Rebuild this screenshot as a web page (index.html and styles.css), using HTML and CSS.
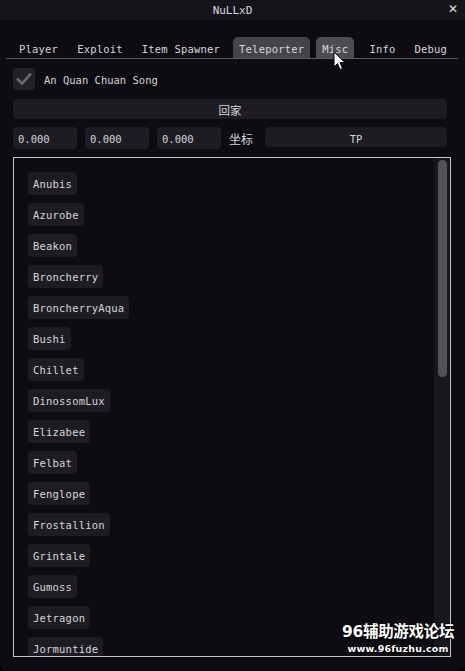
FILE: index.html
```html
<!DOCTYPE html>
<html lang="en">
<head>
    <meta charset="UTF-8">
    <title>NuLLxD</title>
    <link rel="stylesheet" href="styles.css">
</head>
<body>
    <div class="window">
        <div class="titlebar">
            <span class="title">NuLLxD</span>
            <span class="close">&#x2715;</span>
        </div>
        <div class="content">
            <div class="tabs">
                <div class="tab">Player</div>
                <div class="tab">Exploit</div>
                <div class="tab">Item Spawner</div>
                <div class="tab active">Teleporter</div>
                <div class="tab hover">Misc</div>
                <div class="tab">Info</div>
                <div class="tab">Debug</div>
            </div>

            <div class="check-row">
                <div class="checkbox">
                    <svg width="22" height="22" viewBox="0 0 22 22"><path d="M5 11.5 L9 15.5 L17 6.5" fill="none" stroke="#6b6970" stroke-width="2.6" stroke-linecap="square"/></svg>
                </div>
                <span>An Quan Chuan Song</span>
            </div>

            <div class="btn wide">回家</div>

            <div class="coord-row">
                <div class="input">0.000</div>
                <div class="input">0.000</div>
                <div class="input">0.000</div>
                <span class="label">坐标</span>
                <div class="btn tp">TP</div>
            </div>

            <div class="list">
                <div class="items">
                    <div class="item">Anubis</div>
                    <div class="item">Azurobe</div>
                    <div class="item">Beakon</div>
                    <div class="item">Broncherry</div>
                    <div class="item">BroncherryAqua</div>
                    <div class="item">Bushi</div>
                    <div class="item">Chillet</div>
                    <div class="item">DinossomLux</div>
                    <div class="item">Elizabee</div>
                    <div class="item">Felbat</div>
                    <div class="item">Fenglope</div>
                    <div class="item">Frostallion</div>
                    <div class="item">Grintale</div>
                    <div class="item">Gumoss</div>
                    <div class="item">Jetragon</div>
                    <div class="item">Jormuntide</div>
                    <div class="item">Katress</div>
                    <div class="item">Kitsun</div>
                </div>
                <div class="scrollbar"><div class="thumb"></div></div>
            </div>
        </div>

        <div class="watermark">
            <div class="wm-big">96辅助游戏论坛</div>
            <div class="wm-small">www.96fuzhu.com</div>
        </div>

        <svg class="cursor" width="14" height="20" viewBox="0 0 14 20">
            <path d="M1 1 L1 16 L4.5 12.5 L7 18.5 L9.5 17.5 L7 11.5 L12 11.5 Z" fill="#fff" stroke="#000" stroke-width="1"/>
        </svg>
    </div>
</body>
</html>
```

FILE: styles.css
```css
body { margin: 0; background: #000; font-family: "DejaVu Sans Mono", "Noto Sans CJK SC", monospace; font-size: 10.5px; color: #d6d6d8; }
.window { position: relative; width: 465px; height: 671px; background: #0e0c11; border-radius: 0 0 8px 8px; overflow: hidden; }

.titlebar { height: 20px; background: #16141a; display: flex; align-items: center; justify-content: center; position: relative; }
.title { font-size: 11px; color: #d8d8da; }
.close { position: absolute; right: 7px; top: 2px; font-size: 12px; color: #e0e0e0; font-family: "DejaVu Sans", sans-serif; }

.content { padding: 17px 18px 0 13px; }

.tabs { display: flex; gap: 7px; height: 21px; align-items: stretch; border-bottom: 1px solid #5c5a61; margin: 0 -11px 0 -7px; padding-left: 7px; }
.tab { padding: 2px 6px 0; display: flex; align-items: center; border-radius: 5px 5px 0 0; letter-spacing: 0.2px; }
.tab.active { background: #46444b; }
.tab.hover { background: #4e4c53; margin-left: -1px; margin-right: 2px; }

.check-row { display: flex; align-items: center; gap: 9px; margin-top: 9px; height: 22px; }
.checkbox { width: 22px; height: 22px; background: #232127; border-radius: 4px; }
.checkbox svg { display: block; }
.check-row span { padding-top: 2px; }

.btn { background: #1e1c22; border-radius: 4px; height: 20px; display: flex; align-items: center; justify-content: center; }
.wide { margin-top: 9px; font-size: 11.5px; padding-top: 1px; box-sizing: border-box; }

.coord-row { display: flex; align-items: flex-start; gap: 8px; margin-top: 8px; height: 22px; }
.input { width: 59px; background: #1e1c22; border-radius: 4px; display: flex; align-items: center; padding: 2px 0 0 5px; height: 20px; }
.label { height: 22px; display: flex; align-items: center; font-size: 12px; margin-right: 4px; }
.tp { flex: 1; padding-top: 3px; height: 17px; }

.list { margin-top: 8px; margin-right: -4px; height: 498px; border: 1px solid #c6c5c9; display: flex; overflow: hidden; }
.items { flex: 1; padding: 14px 0 0 14px; display: flex; flex-direction: column; align-items: flex-start; gap: 8px; overflow: hidden; }
.item { background: #1e1c22; border-radius: 4px; height: 23px; padding: 0 5px; display: flex; align-items: center; flex-shrink: 0; letter-spacing: 0.2px; }
.scrollbar { width: 16px; background: #19171c; padding-top: 2px; display: flex; justify-content: center; }
.thumb { width: 9px; height: 217px; background: #535157; border-radius: 5px; }

.watermark { position: absolute; left: 342px; top: 619px; color: #fff; font-family: "DejaVu Sans", "Noto Sans CJK SC", sans-serif; font-weight: bold; text-shadow: 0 0 2px #000, 1px 1px 1px #000; text-align: center; }
.wm-big { font-size: 15.5px; letter-spacing: -0.3px; }
.wm-small { font-size: 9.5px; margin-top: 2px; letter-spacing: 0.2px; }

.cursor { position: absolute; left: 333px; top: 51px; }
```
